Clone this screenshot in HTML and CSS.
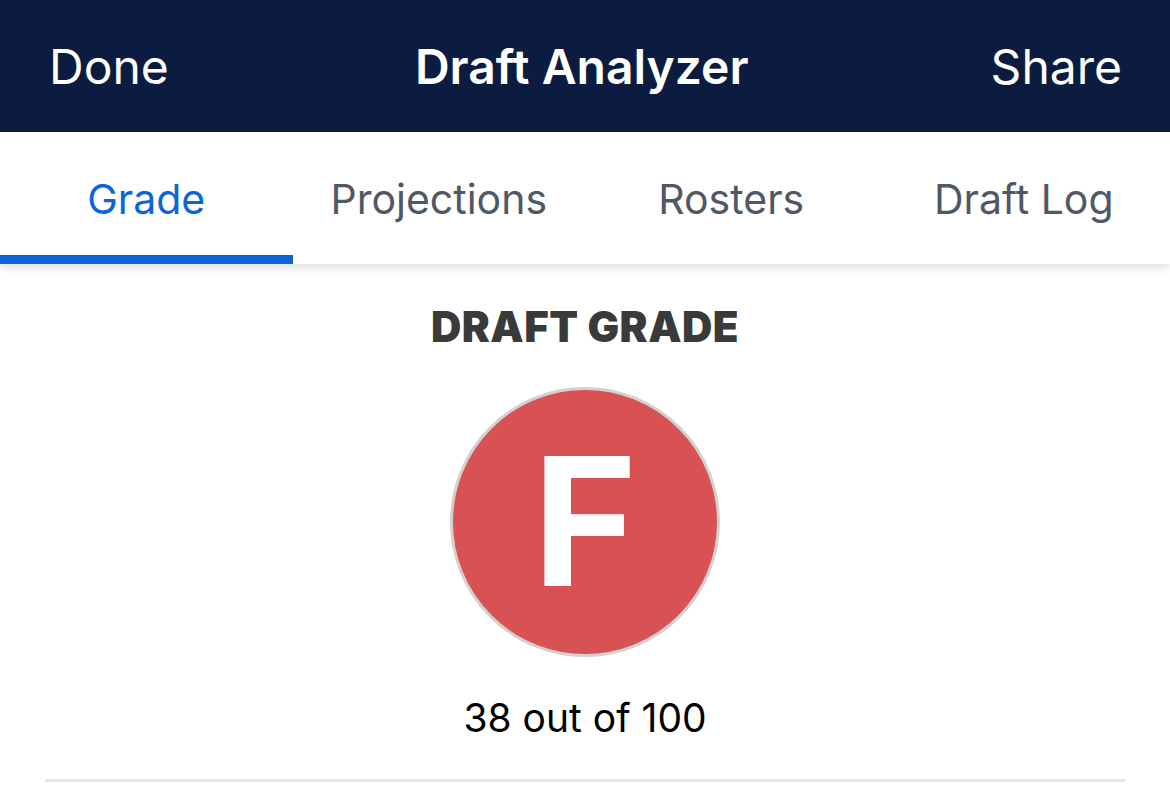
FILE: index.html
```html
<!DOCTYPE html>
<html lang="en">
<head>
<meta charset="UTF-8">
<meta name="viewport" content="width=device-width, initial-scale=1.0">
<title>Draft Analyzer</title>
<link rel="stylesheet" href="styles.css">
</head>
<body>

<header class="navbar">
  <span class="nav-btn">Done</span>
  <span class="nav-title">Draft Analyzer</span>
  <span class="nav-btn">Share</span>
</header>

<nav class="tabs">
  <div class="tab active">Grade</div>
  <div class="tab">Projections</div>
  <div class="tab">Rosters</div>
  <div class="tab">Draft Log</div>
</nav>

<main class="grade">
  <h2 class="grade-title">DRAFT GRADE</h2>
  <div class="grade-circle">F</div>
  <div class="grade-score">38 out of 100</div>
  <hr class="divider">
</main>

</body>
</html>
```

FILE: styles.css
```css
body {
    margin: 0;
    font-family: Inter, "Noto Sans", sans-serif;
    background: #fff;
    color: #000;
    overflow: hidden;
}

.navbar {
    height: 132px;
    background: #0c1b40;
    color: #fff;
    display: flex;
    align-items: center;
    justify-content: space-between;
    padding: 0 48px 0 49px;
    box-sizing: border-box;
}

.nav-btn {
    font-size: 48px;
    font-weight: 400;
}

.nav-title {
    font-size: 48px;
    font-weight: 600;
    margin-left: 4px;
}

.tabs {
    display: grid;
    grid-template-columns: repeat(4, 1fr);
    height: 132px;
    background: #fff;
    box-shadow: 0 4px 8px rgba(0, 0, 0, 0.12);
    position: relative;
}

.tab {
    display: flex;
    align-items: center;
    justify-content: center;
    font-size: 41px;
    color: #505866;
    padding-top: 10px;
    box-sizing: border-box;
    border-bottom: 9px solid transparent;
}

.tab.active {
    color: #0a66d6;
    border-bottom-color: #0a66d6;
}

.grade {
    display: flex;
    flex-direction: column;
    align-items: center;
}

.grade-title {
    margin: 35px 0 0;
    font-size: 42px;
    font-weight: 900;
    color: #3a3a3a;
    letter-spacing: 0.5px;
    line-height: 56px;
}

.grade-circle {
    margin-top: 32px;
    width: 264px;
    height: 264px;
    border-radius: 50%;
    background: #d95253;
    border: 3px solid #d4d0d0;
    display: flex;
    align-items: center;
    justify-content: center;
    color: #fff;
    font-size: 178px;
    font-weight: 700;
    line-height: 1;
}

.grade-score {
    margin-top: 36px;
    font-size: 39px;
    line-height: 50px;
}

.divider {
    width: 1080px;
    margin: 36px 0 0;
    border: none;
    height: 3px;
    background: #e6e6e6;
}
```
